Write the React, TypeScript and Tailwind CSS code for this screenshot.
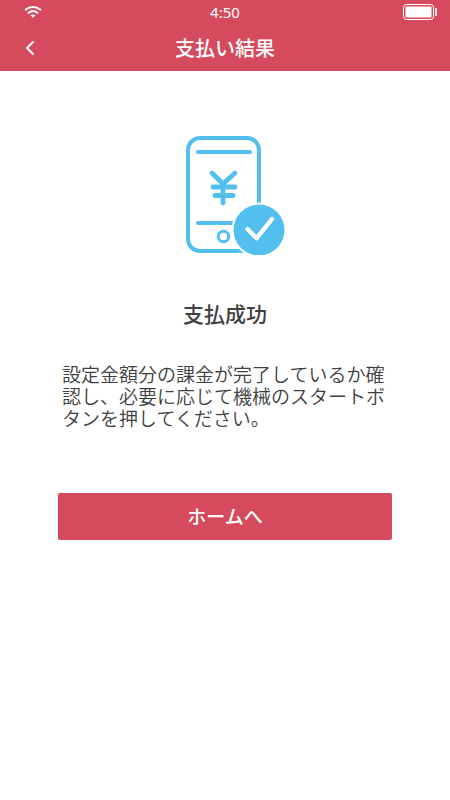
function WifiIcon() {
  return (
    <svg width="18" height="14" viewBox="0 0 18 14" fill="none" stroke="white">
      <path d="M1.8 4.6C6 1.1 12 1.1 16.2 4.6" strokeWidth="2" strokeLinecap="round" />
      <path d="M4.6 7.8C7.2 5.7 10.8 5.7 13.4 7.8" strokeWidth="2" strokeLinecap="round" />
      <path d="M6.5 10.2C8 9.1 10 9.1 11.5 10.2L9 12.8Z" fill="white" stroke="none" />
    </svg>
  );
}

function BatteryIcon() {
  return (
    <svg width="35" height="16" viewBox="0 0 35 16" fill="none">
      <rect x="0.5" y="0.5" width="30" height="15" rx="3" stroke="white" />
      <rect x="2.5" y="2.5" width="26" height="11" rx="1" fill="white" />
      <rect x="32" y="4" width="2" height="8" rx="0.5" fill="#fbe3e6" />
    </svg>
  );
}

function PaymentIcon() {
  return (
    <svg width="100" height="120" viewBox="0 0 100 120" fill="none" strokeLinecap="round">
      <g stroke="#52bfee" strokeWidth="4">
        <rect x="3" y="3" width="71" height="113" rx="12" />
        <path d="M13 17H65" />
        <path d="M13 88H55" />
        <circle cx="38.5" cy="101.5" r="5.3" strokeWidth="3" />
        <path d="M27 38L38 49L50 38M38 49V68M28 52H50M30 60.5H48" strokeWidth="4.8" />
      </g>
      <circle cx="74" cy="95" r="27.5" fill="white" />
      <circle cx="74" cy="95" r="25.5" fill="#52bfee" />
      <path d="M62.5 94L71.7 103.2L87 84" stroke="white" strokeWidth="4.4" strokeLinejoin="round" />
    </svg>
  );
}

function Header() {
  return (
    <header className="bg-[#d54b5d] text-white">
      <div className="grid h-6 grid-cols-3 items-center px-3">
        <span className="pl-3">
          <WifiIcon />
        </span>
        <span className="text-center font-['Noto_Sans'] text-[15px] leading-6">4:50</span>
        <span className="justify-self-end">
          <BatteryIcon />
        </span>
      </div>
      <div className="grid h-[47px] grid-cols-[48px_1fr_48px] items-center">
        <button type="button" aria-label="戻る" className="flex h-full items-center pl-6">
          <svg width="12" height="16" viewBox="0 0 12 16" fill="none">
            <path
              d="M9 2L3 8L9 14"
              stroke="white"
              strokeWidth="2"
              strokeLinecap="round"
              strokeLinejoin="round"
            />
          </svg>
        </button>
        <h1 className="text-center text-xl font-medium">支払い結果</h1>
      </div>
    </header>
  );
}

export default function App() {
  return (
    <div
      lang="ja"
      className="min-h-screen bg-white font-['Noto_Sans_CJK_JP','Noto_Sans',sans-serif] text-[#404040]"
    >
      <Header />
      <main className="flex flex-col items-center px-[58px] pt-16">
        <div className="pl-5">
          <PaymentIcon />
        </div>
        <h2 className="mt-11 text-[21px] leading-7 font-medium">支払成功</h2>
        <p className="mt-9 px-1 text-[19px] leading-[22px] font-[350]">
          設定金額分の課金が完了しているか確認し、必要に応じて機械のスタートボタンを押してください。
        </p>
        <button
          type="button"
          className="mt-16 h-[47px] w-full rounded-xs bg-[#d54b5d] text-[19px] font-medium text-white"
        >
          ホームへ
        </button>
      </main>
    </div>
  );
}
